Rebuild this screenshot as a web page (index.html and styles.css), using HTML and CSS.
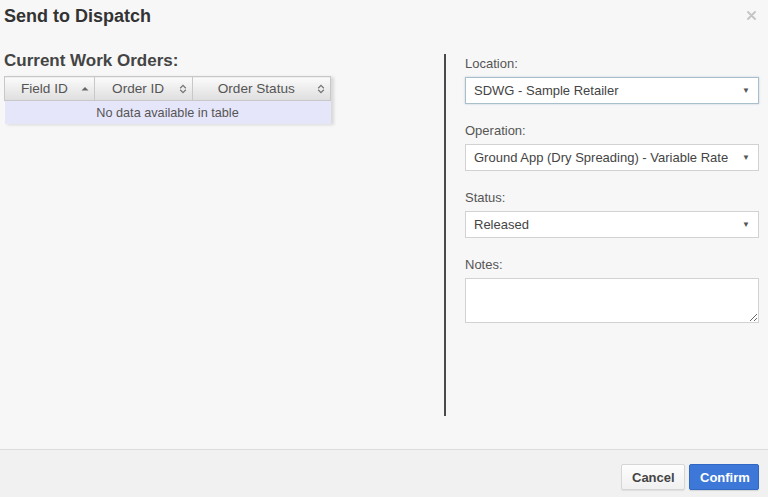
FILE: index.html
```html
<!DOCTYPE html>
<html>
<head>
<meta charset="utf-8">
<link rel="stylesheet" href="styles.css">
</head>
<body>
<div class="modal">
  <div class="modal-header">
    <h1 class="title">Send to Dispatch</h1>
    <span class="close"><svg width="9" height="9" viewBox="0 0 9 9"><path d="M1 1L8 8M8 1L1 8" stroke="#c4c4c4" stroke-width="1.8" stroke-linecap="round"/></svg></span>
  </div>
  <div class="modal-body">
    <div class="left-col">
      <h2 class="subtitle">Current Work Orders:</h2>
      <table class="orders">
        <thead>
          <tr>
            <th class="c1">Field ID<svg class="sort" width="8" height="10" viewBox="0 0 8 10"><path d="M0.5 6.5L4 3L7.5 6.5Z" fill="#666"/></svg></th>
            <th class="c2">Order ID<svg class="sort" width="8" height="10" viewBox="0 0 8 10"><path d="M1.2 4.2L4 1.4L6.8 4.2M1.2 5.8L4 8.6L6.8 5.8" fill="none" stroke="#777" stroke-width="1.3"/></svg></th>
            <th class="c3">Order Status<svg class="sort" width="8" height="10" viewBox="0 0 8 10"><path d="M1.2 4.2L4 1.4L6.8 4.2M1.2 5.8L4 8.6L6.8 5.8" fill="none" stroke="#777" stroke-width="1.3"/></svg></th>
          </tr>
        </thead>
        <tbody>
          <tr><td colspan="3" class="empty">No data available in table</td></tr>
        </tbody>
      </table>
    </div>
    <div class="right-col">
      <div class="field">
        <label class="lbl">Location:</label>
        <div class="select focused"><span>SDWG - Sample Retailer</span><span class="arrow">&#9660;</span></div>
      </div>
      <div class="field">
        <label class="lbl">Operation:</label>
        <div class="select"><span>Ground App (Dry Spreading) - Variable Rate</span><span class="arrow">&#9660;</span></div>
      </div>
      <div class="field">
        <label class="lbl">Status:</label>
        <div class="select"><span>Released</span><span class="arrow">&#9660;</span></div>
      </div>
      <div class="field">
        <label class="lbl">Notes:</label>
        <textarea class="notes"></textarea>
      </div>
    </div>
  </div>
  <div class="modal-footer">
    <button class="btn btn-default">Cancel</button>
    <button class="btn btn-primary">Confirm</button>
  </div>
</div>
</body>
</html>
```
FILE: styles.css
```css
html, body {
  margin: 0;
  padding: 0;
}
body {
  background: #f7f7f7;
  font-family: "Liberation Sans", Arial, sans-serif;
  color: #333;
  width: 768px;
  height: 497px;
  overflow: hidden;
}
.modal {
  display: flex;
  flex-direction: column;
  height: 497px;
}
.modal-header {
  height: 50px;
  display: flex;
  justify-content: space-between;
  align-items: flex-start;
  padding: 0 12px 0 4px;
  box-sizing: border-box;
}
.title {
  margin: 5px 0 0 0;
  font-size: 18px;
  line-height: 22px;
  font-weight: bold;
  color: #333;
}
.close {
  margin-top: 11px;
  display: block;
  line-height: 0;
}
.modal-body {
  display: flex;
  height: 366px;
}
.left-col {
  width: 444px;
  padding-left: 4px;
  box-sizing: border-box;
}
.subtitle {
  margin: 1px 0 5px 0;
  font-size: 17px;
  line-height: 20px;
  font-weight: bold;
  color: #444;
}
.orders {
  border-collapse: collapse;
  width: 327px;
  font-size: 13.6px;
  box-shadow: 3px 1px 3px rgba(0,0,0,0.12);
}
.orders th {
  position: relative;
  height: 24px;
  padding: 0 18px 0 8px;
  box-sizing: border-box;
  font-weight: normal;
  color: #555;
  text-align: center;
  background: linear-gradient(#fbfbfb, #dedede);
  border: 1px solid #c8c8c8;
}
.orders th.c1 { width: 90px; }
.orders th.c2 { width: 98px; }
.orders th.c3 { width: 139px; }
.sort {
  position: absolute;
  right: 5px;
  top: 7px;
}
.orders td.empty {
  height: 23px;
  padding: 0;
  text-align: center;
  font-size: 12.7px;
  color: #555;
  background: #e6e6fa;
}
.right-col {
  margin-top: 4px;
  height: 362px;
  border-left: 2px solid #4a4a4a;
  padding: 1px 9px 0 19px;
  flex: 1;
  box-sizing: border-box;
}
.field {
  display: flex;
  flex-direction: column;
  margin-bottom: 18px;
}
.lbl {
  font-size: 13px;
  line-height: 18px;
  color: #555;
  margin-bottom: 4px;
}
.select {
  height: 27px;
  box-sizing: border-box;
  border: 1px solid #d2d2d2;
  background: #fff;
  display: flex;
  align-items: center;
  justify-content: space-between;
  padding: 0 8px 0 8px;
  font-size: 13px;
  color: #444;
}
.select.focused {
  border-color: #a9bfcc;
  box-shadow: 0 0 2px rgba(100,140,170,0.35);
}
.arrow {
  font-size: 8px;
  color: #555;
}
.notes {
  height: 45px;
  box-sizing: border-box;
  border: 1px solid #d2d2d2;
  background: #fff;
  resize: vertical;
  margin: 0;
  font-family: inherit;
}
.modal-footer {
  margin-top: 33px;
  flex: 1;
  border-top: 1px solid #dcdcdc;
  background: #f1f1f1;
  display: flex;
  justify-content: flex-end;
  align-items: flex-start;
  gap: 4px;
  padding: 14px 9px 0 0;
}
.btn {
  height: 26px;
  font-family: "Liberation Sans", Arial, sans-serif;
  font-size: 13px;
  font-weight: bold;
  padding: 0 10px;
  border-radius: 2px;
  margin: 0;
}
.btn-default {
  width: 64px;
  color: #444;
  background: linear-gradient(#fdfdfd, #f0f0f0);
  border: 1px solid #d6d6d6;
  box-shadow: 0 1px 1px rgba(0,0,0,0.08);
}
.btn-primary {
  width: 70px;
  color: #fff;
  background: #3d78d8;
  border: 1px solid #3168c4;
  box-shadow: 0 1px 1px rgba(0,0,0,0.12);
}
```
